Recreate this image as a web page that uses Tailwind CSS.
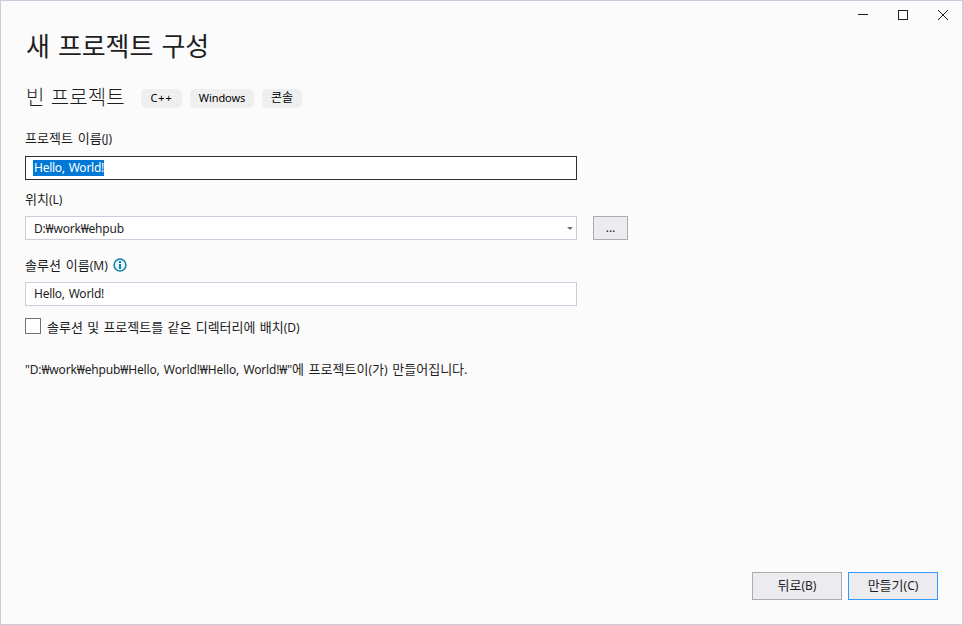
<!DOCTYPE html>
<html lang="ko">
<head>
    <meta charset="UTF-8">
    <meta name="viewport" content="width=device-width, initial-scale=1.0">
    <title>새 프로젝트 구성</title>
    <script src="https://cdn.jsdelivr.net/npm/@tailwindcss/browser@4"></script>
</head>
<body class="font-['Noto_Sans','Noto_Sans_CJK_KR',sans-serif] text-[#1e1e1e]">
    <div class="flex flex-col w-[963px] h-[625px] bg-[#fbfbfb] border border-[#ccccdc] overflow-hidden whitespace-nowrap">
        <!-- Window buttons -->
        <div class="flex justify-end h-7 -mr-px shrink-0">
            <button class="w-10 h-7 flex items-center justify-center" aria-label="minimize">
                <svg width="12" height="12" viewBox="0 0 12 12" shape-rendering="crispEdges"><path d="M1 5.5h10" stroke="#1e1e1e"/></svg>
            </button>
            <button class="w-10 h-7 flex items-center justify-center" aria-label="maximize">
                <svg width="12" height="12" viewBox="0 0 12 12" shape-rendering="crispEdges"><path d="M1.5 1.5h9v9h-9z" fill="none" stroke="#1e1e1e"/></svg>
            </button>
            <button class="w-10 h-7 flex items-center justify-center" aria-label="close">
                <svg width="12" height="12" viewBox="0 0 12 12"><path d="M1 1l10 10M11 1L1 11" stroke="#1e1e1e"/></svg>
            </button>
        </div>

        <!-- Form -->
        <main class="flex flex-col flex-1 pl-6 pr-6">
            <h1 class="h-9 mt-[-1px] pl-px leading-9 text-[26px] tracking-[-0.1px] [word-spacing:1.5px]">새 프로젝트 구성</h1>

            <div class="flex items-center h-7 mt-5">
                <h2 class="w-[116px] pl-px leading-[30px] text-xl font-light [word-spacing:1px] tracking-[0.1px]">빈 프로젝트</h2>
                <div class="flex gap-2 text-[11px] leading-[18px] text-center text-black">
                    <span class="w-[41px] h-[19px] bg-[#efeff0] rounded-[5px] tracking-[0.9px]">C++</span>
                    <span class="w-16 h-[19px] bg-[#efeff0] rounded-[5px] tracking-[-0.1px]">Windows</span>
                    <span class="w-10 h-[19px] bg-[#efeff0] rounded-[5px] text-xs leading-[18px]">콘솔</span>
                </div>
            </div>

            <label class="h-5 mt-4 leading-5 text-[13px] [word-spacing:1.5px]">프로젝트 이름<span class="text-xs">(J)</span></label>
            <div class="flex items-center w-[552px] h-6 mt-2 px-[7px] bg-white border border-[#2d2d30] text-xs tracking-[-0.25px] [word-spacing:1px]">
                <span class="h-4 pl-px leading-[15px] bg-[#0078d7] text-white">Hello, World!</span>
            </div>

            <label class="h-5 mt-[9px] leading-5 text-[13px]">위치<span class="text-xs">(L)</span></label>
            <div class="flex gap-4 mt-[7px]">
                <div class="flex items-center justify-between w-[552px] h-6 pl-2 pr-[3px] bg-white border border-[#ccccdc] text-xs tracking-[-0.2px]">
                    <span class="pt-0.5">D:₩work₩ehpub</span>
                    <svg width="6" height="3" viewBox="0 0 6 3"><path d="M0 0h6L3 3z" fill="#717171"/></svg>
                </div>
                <button class="w-[35px] h-6 bg-[#ececf0] border border-[#acacac] text-xs leading-[22px]">...</button>
            </div>

            <div class="flex items-center h-5 mt-[15px]">
                <label class="w-[88px] leading-[18px] text-[13px] [word-spacing:1.5px]">솔루션 이름<span class="text-xs">(M)</span></label>
                <svg width="14" height="14" viewBox="0 0 14 14">
                    <circle cx="7" cy="7" r="5.9" fill="#e4f3f8" stroke="#1380a8" stroke-width="1.5"/>
                    <path d="M6 3h2v2H6zM6 6h2v5H6z" fill="#1380a8"/>
                </svg>
            </div>
            <div class="flex items-center w-[552px] h-6 mt-[7px] px-2 bg-white border border-[#ccccdc] text-xs tracking-[-0.25px] [word-spacing:1px]">Hello, World!</div>

            <div class="flex items-center h-5 mt-[11px] gap-1.5">
                <span class="w-4 h-4 mb-[2px] bg-white border border-[#717171]"></span>
                <label class="leading-5 text-[13px] [word-spacing:0.9px]">솔루션 및 프로젝트를 같은 디렉터리에 배치<span class="text-xs">(D)</span></label>
            </div>

            <p class="h-5 mt-[22px] leading-5 text-[13px] [word-spacing:1.3px]"><span class="text-xs tracking-[-0.15px]">"D:₩work₩ehpub₩Hello, World!₩Hello, World!₩"</span>에 프로젝트이<span class="text-xs">(</span>가<span class="text-xs">)</span> 만들어집니다.</p>
        </main>

        <!-- Actions -->
        <footer class="flex justify-end gap-1.5 h-[52px] pr-6 text-[13px]">
            <button class="w-[90px] h-7 leading-[24px] pb-0.5 bg-[#ececf0] border border-[#acacac]">뒤로<span class="text-xs">(B)</span></button>
            <button class="w-[90px] h-7 leading-[24px] pb-0.5 bg-[#ececf0] border border-[#3399ff]">만들기<span class="text-xs">(C)</span></button>
        </footer>
    </div>
</body>
</html>
